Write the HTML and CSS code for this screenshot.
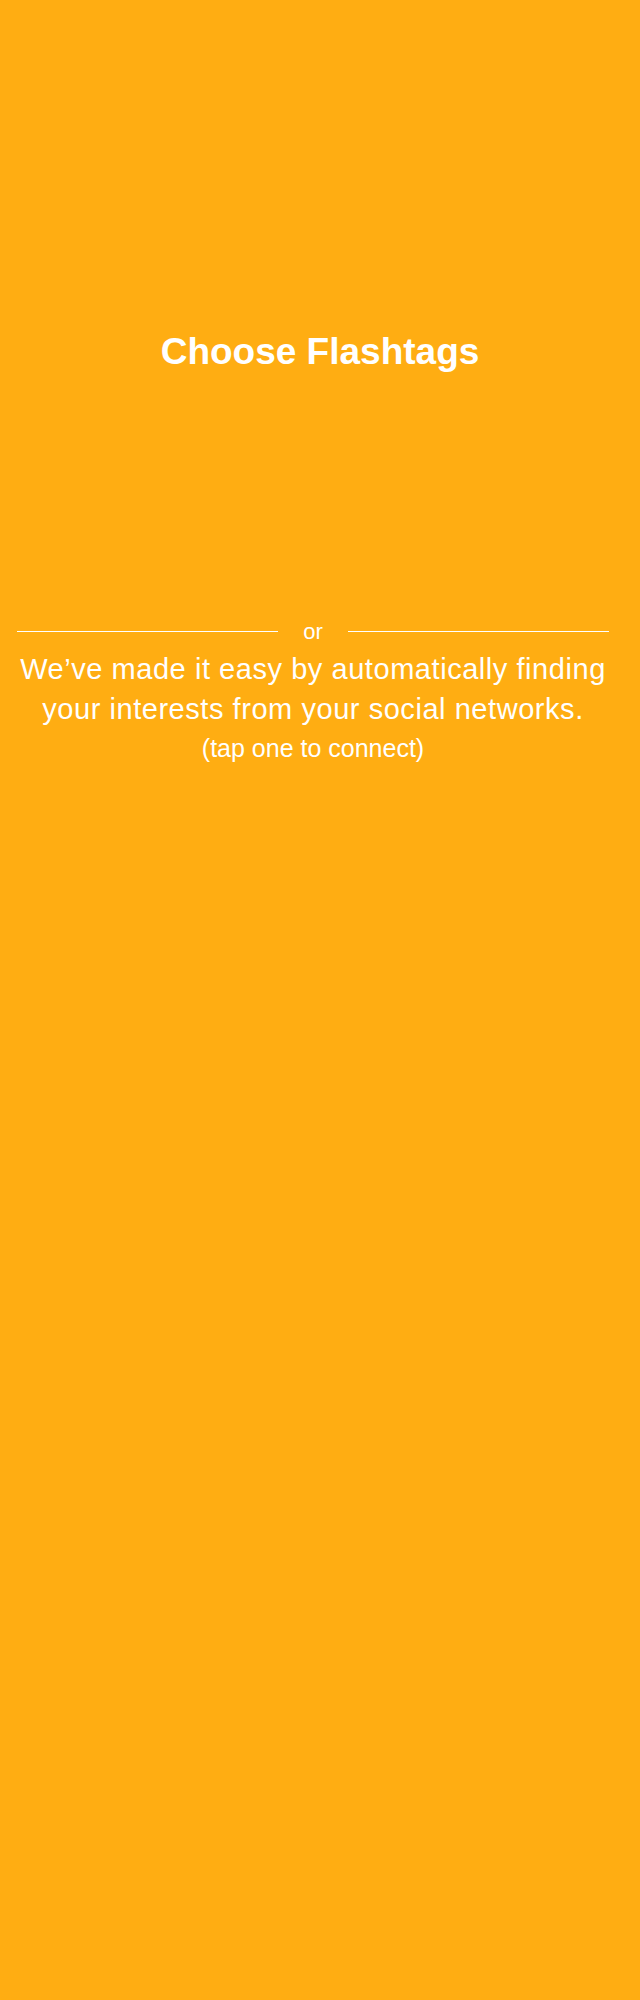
FILE: index.html
```html
<!DOCTYPE html>
<html lang="en">
<head>
<meta charset="utf-8">
<title>Choose Flashtags</title>
<link rel="stylesheet" href="styles.css">
</head>
<body>
<main class="screen">
  <h1 class="title">Choose Flashtags</h1>
  <section class="connect">
    <div class="divider">
      <span class="divider-line"></span>
      <span class="divider-text">or</span>
      <span class="divider-line"></span>
    </div>
    <p class="lead">We’ve made it easy by automatically finding your interests from your social networks.</p>
    <p class="hint">(tap one to connect)</p>
  </section>
</main>
</body>
</html>
```
FILE: styles.css
```css
html, body {
  margin: 0;
  padding: 0;
  background: #ffad12;
}

body {
  font-family: "Liberation Sans", Arial, sans-serif;
  color: #ffffff;
  min-height: 2000px;
}

.screen {
  display: flex;
  flex-direction: column;
  padding-top: 330px;
}

.title {
  margin: 0;
  text-align: center;
  font-size: 37px;
  line-height: 44px;
  font-weight: 700;
}

.connect {
  margin: 245px 31px 0 17px;
  display: flex;
  flex-direction: column;
  align-items: center;
  text-align: center;
}

.divider {
  align-self: stretch;
  display: flex;
  align-items: center;
  height: 25px;
}

.divider-line {
  flex: 1;
  height: 1px;
  background: #ffffff;
}

.divider-text {
  padding: 0 25px;
  font-size: 22px;
  line-height: 25px;
  width: 20px;
  text-align: center;
}

.lead {
  margin: 5px 0 0;
  font-size: 29px;
  line-height: 40px;
  letter-spacing: 0.55px;
  width: 592px;
}

.hint {
  margin: 1px 0 0;
  font-size: 25px;
  line-height: 36px;
}
```
